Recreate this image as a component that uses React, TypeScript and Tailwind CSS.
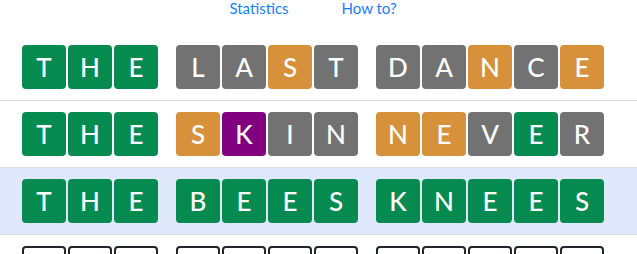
import React from 'react';

type Tile = { l: string; c: 'g' | 'x' | 'o' | 'p' | 'e' };

const tileClass: Record<Tile['c'], string> = {
  g: 'bg-[#058a4f] text-white',
  x: 'bg-[#727272] text-white',
  o: 'bg-[#d6913a] text-white',
  p: 'bg-[#800080] text-white',
  e: 'bg-white border-2 border-[#212529]',
};

function parse(word: string, colors: string): Tile[] {
  return word.split('').map((l, i) => ({ l: l === '_' ? '' : l, c: colors[i] as Tile['c'] }));
}

const rows: { groups: Tile[][]; active?: boolean }[] = [
  { groups: [parse('THE', 'ggg'), parse('LAST', 'xxox'), parse('DANCE', 'xxoxo')] },
  { groups: [parse('THE', 'ggg'), parse('SKIN', 'opxx'), parse('NEVER', 'ooxgx')] },
  { groups: [parse('THE', 'ggg'), parse('BEES', 'gggg'), parse('KNEES', 'ggggg')], active: true },
  { groups: [parse('___', 'eee'), parse('____', 'eeee'), parse('_____', 'eeeee')] },
];

export default function App() {
  return (
    <div className="w-[637px] h-[254px] overflow-hidden bg-white" style={{ fontFamily: 'Lato, "Open Sans", sans-serif' }}>
      <div className="w-[626px] h-[34px] flex justify-center gap-[53px] text-[15px] leading-[16px] text-[#1a7dff]">
        <span>Statistics</span>
        <span>How to?</span>
      </div>
      {rows.map((row, r) => (
        <div
          key={r}
          className={`w-[637px] border-b border-[#dcdcdc] py-[11px] ${row.active ? 'bg-[#dfe9fb]' : ''}`}
        >
          <div className="w-[626px] flex justify-center gap-[18px]">
            {row.groups.map((g, gi) => (
              <div key={gi} className="flex gap-[2px]">
                {g.map((t, ti) => (
                  <div
                    key={ti}
                    className={`w-[44px] h-[44px] rounded-[4px] flex items-center justify-center text-[26px] font-medium ${tileClass[t.c]}`}
                  >
                    {t.l}
                  </div>
                ))}
              </div>
            ))}
          </div>
        </div>
      ))}
    </div>
  );
}
